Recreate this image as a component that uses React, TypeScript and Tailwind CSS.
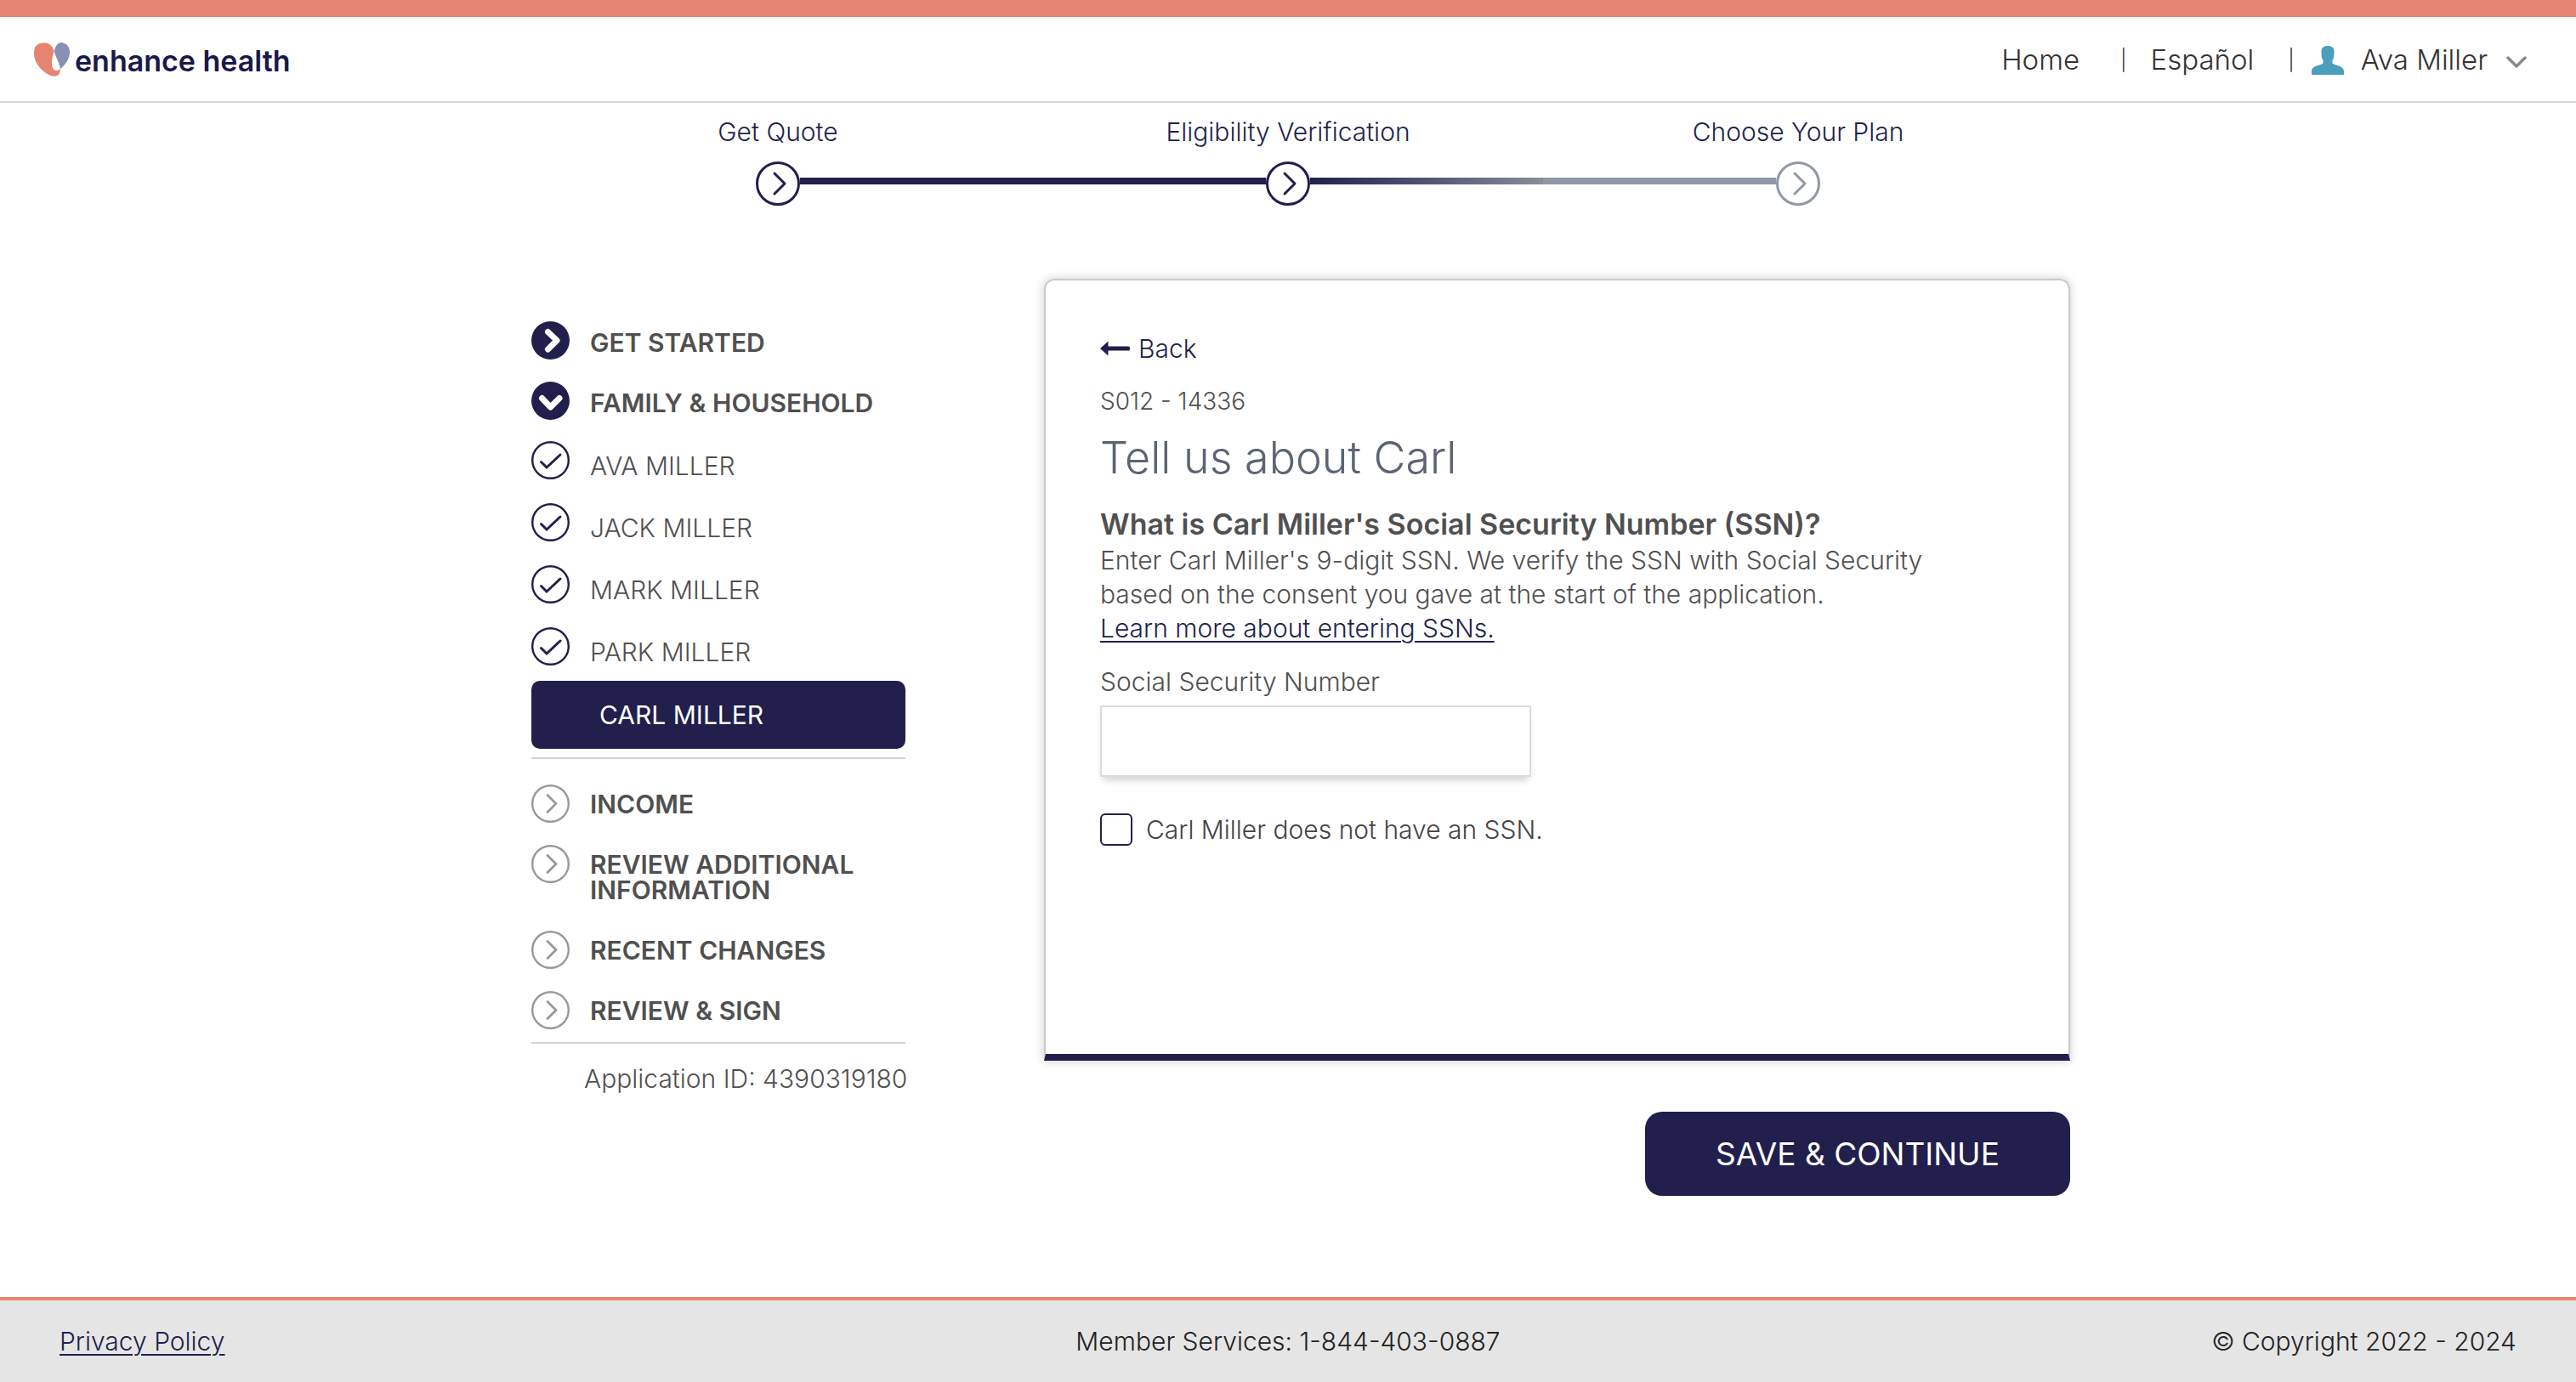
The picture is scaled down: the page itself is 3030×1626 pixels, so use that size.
import React from "react";

function LogoMark() {
  return (
    <svg viewBox="0 0 126 120" className="h-10 w-[42px]" aria-hidden="true">
      <path
        d="M71 31C65 12 54 1 36 1C10 3 0 14 0 38C0 80 45 119 74 119C86 119 93 108 92 92C88 98 80 100 74 98C59 92 60 60 71 31Z"
        fill="#e58571"
      />
      <path d="M71 31C76 10 86 0 96 0C115 2 126 15 126 34C126 60 110 78 93 94C91 75 80 60 71 31Z" fill="#8990b5" />
    </svg>
  );
}

function PersonIcon() {
  return (
    <svg viewBox="0 0 38 34" className="h-[34px] w-[38px]" fill="#4a9fba" aria-hidden="true">
      <path d="M19 0C24 0 26.500 2 26.500 7C26.500 13 26 15 24.500 16.500V20.500C27 23 38 23 38 30V34H0V30C0 23 11 23 13.500 20.500V16.500C12 15 11.500 13 11.500 7C11.500 2 14 0 19 0Z" />
    </svg>
  );
}

function StepIcon() {
  return (
    <svg viewBox="0 0 52 52" className="size-[52px] shrink-0" fill="none" stroke="currentColor" aria-hidden="true">
      <circle cx="26" cy="26" r="24.5" strokeWidth="3" />
      <path d="M22 14L34 26L22 38" strokeWidth="3" strokeLinecap="round" strokeLinejoin="round" />
    </svg>
  );
}

type IconKind = "right" | "down" | "check" | "pending";

function NavIcon({ kind }: { kind: IconKind }) {
  if (kind === "check") {
    return (
      <svg viewBox="0 0 45 45" className="size-[45px] shrink-0" fill="none" stroke="#221f4d" aria-hidden="true">
        <circle cx="22.5" cy="22.5" r="21.3" strokeWidth="2.4" />
        <path d="M11.5 24.5L18 31L34 16" strokeWidth="3" strokeLinecap="round" />
      </svg>
    );
  }
  if (kind === "pending") {
    return (
      <svg viewBox="0 0 45 45" className="size-[45px] shrink-0" fill="none" stroke="#999999" aria-hidden="true">
        <circle cx="22.5" cy="22.5" r="21.3" strokeWidth="2.4" />
        <path d="M19 12.5L29 22.5L19 32.5" strokeWidth="2.8" strokeLinecap="round" strokeLinejoin="round" />
      </svg>
    );
  }
  return (
    <svg viewBox="0 0 45 45" className="size-[45px] shrink-0" fill="none" aria-hidden="true">
      <circle cx="22.5" cy="22.5" r="22.5" fill="#221f4d" />
      <path
        d={kind === "right" ? "M19.5 12.5L30 22.5L19.5 33" : "M12.5 19.5L22.5 30L33 19.5"}
        stroke="#ffffff"
        strokeWidth="7"
        strokeLinecap="round"
        strokeLinejoin="round"
      />
    </svg>
  );
}

function Section({ kind, label }: { kind: IconKind; label: string }) {
  return (
    <button type="button" className="flex w-full items-start gap-6 text-left">
      <NavIcon kind={kind} />
      <span
        className={
          kind === "pending"
            ? "pt-2 pb-[7px] text-[30px] leading-[30px] font-semibold"
            : "pt-2.5 pb-[5px] text-[30px] leading-[30px] font-semibold"
        }
      >
        {label}
      </span>
    </button>
  );
}

const members = ["AVA MILLER", "JACK MILLER", "MARK MILLER", "PARK MILLER"];

function Sidebar() {
  return (
    <aside className="w-[440px] shrink-0 pt-[50px] text-[#505050]">
      <nav aria-label="Application sections">
        <div className="flex flex-col gap-[26px]">
          <Section kind="right" label="GET STARTED" />
          <Section kind="down" label="FAMILY & HOUSEHOLD" />
        </div>
        <ul className="mt-[25px] flex flex-col gap-7">
          {members.map((name) => (
            <li key={name}>
              <a href="#member" className="flex h-[45px] items-start gap-6">
                <NavIcon kind="check" />
                <span className="pt-3 text-[30px] leading-[34px] font-light">{name}</span>
              </a>
            </li>
          ))}
        </ul>
        <a
          href="#current"
          aria-current="page"
          className="mt-[18px] flex h-20 items-center rounded-[10px] bg-[#221f4d] pl-20 text-[30px] text-white"
        >
          CARL MILLER
        </a>
        <div className="mt-2.5 flex flex-col gap-[26px] border-y-2 border-[#d2d2d2] pt-[30px] pb-[15px]">
          <Section kind="pending" label="INCOME" />
          <Section kind="pending" label="REVIEW ADDITIONAL INFORMATION" />
          <Section kind="pending" label="RECENT CHANGES" />
          <Section kind="pending" label="REVIEW & SIGN" />
        </div>
      </nav>
      <p className="mt-6 pl-[62px] text-[30px] leading-[34px] font-light whitespace-nowrap">
        Application ID: 4390319180
      </p>
    </aside>
  );
}

function Stepper() {
  return (
    <section aria-label="Progress" className="mx-auto w-full max-w-[1800px] pt-[17px] text-[#221f4d]">
      <ol className="grid grid-cols-3 text-center text-[30px] leading-[34px] font-light">
        <li>Get Quote</li>
        <li>Eligibility Verification</li>
        <li>Choose Your Plan</li>
      </ol>
      <div className="mt-[18px] flex items-start px-[274px]">
        <StepIcon />
        <div className="mt-[19px] h-2 flex-1 bg-[#221f4d]" />
        <StepIcon />
        <div className="mt-[19px] flex h-2 flex-1">
          <div className="flex-1 bg-linear-to-r from-[#221f4d] to-[#878f97]" />
          <div className="flex-1 bg-[#9099a5]" />
        </div>
        <span className="text-[#9099a5]">
          <StepIcon />
        </span>
      </div>
    </section>
  );
}

function QuestionCard() {
  return (
    <section className="min-h-[920px] rounded-t-xl border-2 border-b-8 border-[#cbcbcb] border-b-[#221f4d] px-16 pt-[63px] text-[30px] font-light text-[#505050] shadow-[0_0_12px_rgba(0,0,0,0.2)]">
      <button type="button" className="flex items-center gap-2.5 leading-[34px] text-[#221f4d]">
        <svg viewBox="0 0 35 18" className="h-[18px] w-[35px]" fill="currentColor" aria-hidden="true">
          <path d="M0 9L9.5 0.5V6.5H33.5Q35 6.5 35 8V10Q35 11.5 33.5 11.5H9.5V17.5Z" />
        </svg>
        Back
      </button>
      <p className="mt-7 text-[28px] leading-[34px]">S012 - 14336</p>
      <h1 className="mt-5 text-[52px] leading-[60px] text-[#5b6472]">Tell us about Carl</h1>
      <h2 className="mt-7 text-[34px] leading-10 font-semibold">
        What is Carl Miller's Social Security Number (SSN)?
      </h2>
      <p className="mt-0.5 max-w-[1060px] leading-10">
        Enter Carl Miller's 9-digit SSN. We verify the SSN with Social Security
        <br />
        based on the consent you gave at the start of the application.
        <br />
        <a href="#ssn-help" className="text-[#221f4d] underline decoration-2 underline-offset-4">
          Learn more about entering SSNs.
        </a>
      </p>
      <label htmlFor="ssn" className="mt-[26px] block leading-[34px]">
        Social Security Number
      </label>
      <input
        id="ssn"
        type="text"
        className="mt-[11px] block h-[84px] w-full max-w-[507px] border-2 border-[#dadddd] px-4 shadow-[0_7px_8px_-3px_rgba(0,0,0,0.18)]"
      />
      <label className="mt-[43px] flex items-center gap-4 leading-[38px] text-[#444444]">
        <input
          type="checkbox"
          className="size-[38px] appearance-none rounded-md border-2 border-[#221f4d] checked:bg-[#221f4d]"
        />
        Carl Miller does not have an SSN.
      </label>
    </section>
  );
}

export default function App() {
  return (
    <div className="flex min-h-screen flex-col bg-white font-['Inter',sans-serif]">
      <header className="flex h-[121px] items-center justify-between border-t-[20px] border-b-2 border-t-[#e58571] border-b-[#d9d9d9] pr-[58px] pl-10">
        <a href="#home" className="flex items-center gap-1.5 text-[34px] leading-10 font-semibold text-[#1a184a]">
          <LogoMark />
          <span className="pt-1">enhance health</span>
        </a>
        <nav aria-label="Main" className="flex items-center pt-0.5 text-[33px] font-light text-[#333333]">
          <a href="#home">Home</a>
          <span className="mr-7 ml-12 text-[24px]">|</span>
          <a href="#es">Español</a>
          <span className="mr-5 ml-10 text-[24px]">|</span>
          <button type="button" className="flex items-center">
            <PersonIcon />
            <span className="mr-[22px] ml-5">Ava Miller</span>
            <svg viewBox="0 0 24 14" className="mt-1 h-3.5 w-6" fill="none" stroke="#8a8a8a" aria-hidden="true">
              <path d="M2 2L12 12L22 2" strokeWidth="3.5" strokeLinecap="round" strokeLinejoin="round" />
            </svg>
          </button>
        </nav>
      </header>

      <Stepper />

      <main className="mx-auto mt-[86px] flex w-full max-w-[1840px] items-start gap-[163px] pl-[30px]">
        <Sidebar />
        <div className="min-w-0 flex-1">
          <QuestionCard />
          <div className="mt-[60px] flex justify-end">
            <button type="button" className="h-[99px] w-[500px] rounded-[20px] bg-[#221f4d] text-[37px] text-white">
              SAVE &amp; CONTINUE
            </button>
          </div>
        </div>
      </main>

      <footer className="mt-auto grid h-[100px] grid-cols-3 items-center border-t-4 border-[#e58571] bg-[#e5e5e5] px-[70px] text-[30px] font-light text-[#222222]">
        <a href="#privacy" className="justify-self-start text-[#221f4d] underline decoration-2 underline-offset-4">
          Privacy Policy
        </a>
        <p className="justify-self-center">Member Services: 1-844-403-0887</p>
        <p className="justify-self-end">© Copyright 2022 - 2024</p>
      </footer>
    </div>
  );
}
